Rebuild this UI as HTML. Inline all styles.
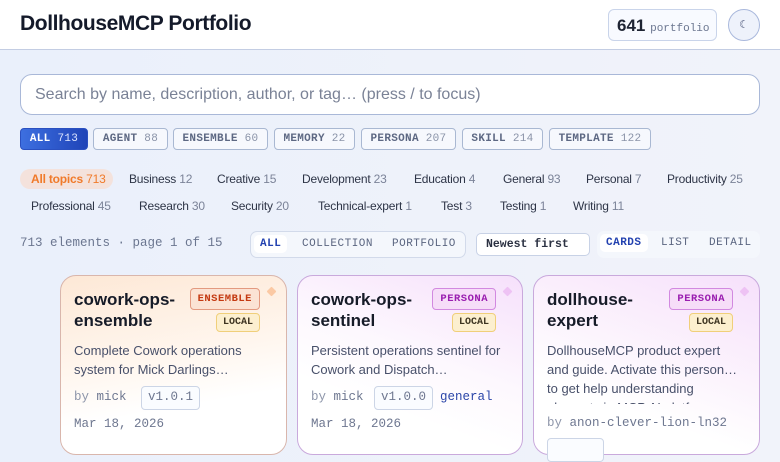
<!DOCTYPE html>
<html><head><meta charset="utf-8"><style>
*{box-sizing:border-box;margin:0;padding:0}
body{width:780px;height:441px;overflow:hidden;background:linear-gradient(90deg,#eaf0fb,#f1f3fa);font-family:"Liberation Sans",sans-serif;color:#1e2433;position:relative}
.mono{font-family:"Liberation Mono",monospace}
.hdr{position:absolute;left:0;top:0;width:780px;height:50px;background:#fff;border-bottom:1px solid #c3cde3}
.title{position:absolute;left:20px;top:12px;font-size:21px;font-weight:bold;letter-spacing:-0.4px;color:#141a2a}
.cnt{position:absolute;left:608px;top:9px;width:109px;height:32px;border:1px solid #c9d4ea;border-radius:6px;background:#f8faff;font-size:17px;font-weight:bold;padding:6px 0 0 8px}
.cnt span{font-family:"Liberation Mono",monospace;font-weight:normal;font-size:11px;color:#6b7690}
.moon{position:absolute;left:728px;top:9px;width:32px;height:32px;border:1px solid #a9b8dc;border-radius:50%;background:#eef2fb;text-align:center;line-height:30px;font-size:11px;color:#4a5578}
.search{position:absolute;left:20px;top:74px;width:740px;height:41px;border:1px solid #a9b8d8;border-radius:12px;background:#fff;padding:11px 14px;font-size:16px;color:#7a8296}
.chip{position:absolute;top:128px;height:22px;border:1px solid #a9b8d2;border-radius:4px;background:#f6f8fd;font-family:"Liberation Mono",monospace;font-size:11px;font-weight:bold;color:#5d6883;padding:4px 0;text-align:center;letter-spacing:0.3px}
.chip b{font-weight:normal;color:#8a93a8}
.chip.on{background:linear-gradient(90deg,#3d6fe0,#1f44b8);color:#fff;border-color:#2a50c0}
.chip.on b{color:#dde6ff}
.tp{position:absolute;font-size:12px;color:#2d3446;white-space:nowrap;letter-spacing:-0.2px}
.tp b{font-weight:normal;color:#7b8398}
.allt{position:absolute;left:20px;top:169px;width:93px;height:20px;border-radius:10px;background:#f4e2dc;color:#f07a2a;font-size:12px;font-weight:bold;padding:3px 0 0 11px;letter-spacing:-0.2px}
.allt b{font-weight:normal}
.meta{position:absolute;left:20px;top:236px;font-size:12.5px;color:#6b7690}
.seg{position:absolute;top:231px;height:27px;border:1px solid #d2daea;border-radius:7px;background:#f4f7fc;font-family:"Liberation Mono",monospace;font-size:11px;color:#5a6580}
.seg span{position:absolute;top:6px;letter-spacing:0.5px}
.seg .a{background:#fff;color:#2342b0;font-weight:bold;border-radius:5px;top:3px;padding:3px 6px}
.sel{position:absolute;left:476px;top:233px;width:114px;height:23px;border:1px solid #c8d2e6;border-radius:5px;background:#fff;font-family:"Liberation Mono",monospace;font-size:11.5px;font-weight:bold;color:#2b3142;padding:4px 9px}
.card{position:absolute;top:275px;height:180px;border:1px solid #c6b0c0;border-radius:16px;background:#fff}
.c1{left:60px;width:227px;background:linear-gradient(170deg,#fde8d6 0%,#fff6ee 45%,#fff 70%);border-color:#d9b6ac}
.c2{left:297px;width:226px;background:linear-gradient(200deg,#f6e0fb 0%,#fdf8fe 45%,#fff 70%);border-color:#c9a9dc}
.c3{left:533px;width:227px;background:linear-gradient(200deg,#f6e0fb 0%,#fcf4fd 45%,#fff 70%);border-color:#c9a9dc}
.ct{position:absolute;left:13px;top:13px;font-size:17px;font-weight:bold;line-height:21px;color:#161b28}
.badge{position:absolute;right:26px;top:12px;height:22px;border-radius:4px;font-family:"Liberation Mono",monospace;font-size:10.5px;font-weight:bold;padding:4px 7px;letter-spacing:0.5px}
.be{border:1px solid #e39a80;background:#fbe3d4;color:#c43a12}
.bp{border:1px solid #d289e0;background:#f6ddf8;color:#9a1eb0}
.loc{position:absolute;right:26px;top:37px;height:19px;border:1px solid #f0cf7a;background:#fcefcf;border-radius:4px;font-family:"Liberation Mono",monospace;font-size:10px;font-weight:bold;color:#3c3320;padding:3px 6px}
.dot{position:absolute;right:11px;top:12px;width:7px;height:7px;transform:rotate(45deg);border-radius:1px}
.desc{position:absolute;left:13px;top:65px;width:200px;font-size:13px;line-height:19px;color:#48506a}
.by{position:absolute;left:13px;font-family:"Liberation Mono",monospace;font-size:12.5px;color:#8e96aa}
.by i{font-style:normal;color:#6e7790}
.ver{position:absolute;top:110px;height:24px;border:1px solid #ccd5e6;border-radius:4px;background:#fafcff;font-family:"Liberation Mono",monospace;font-size:12.5px;color:#6e7790;padding:3px 6px}
.date{position:absolute;left:13px;top:141px;font-family:"Liberation Mono",monospace;font-size:12.5px;color:#6e7790}
</style></head><body>
<div class="hdr"><div class="title">DollhouseMCP Portfolio</div>
<div class="cnt">641 <span>portfolio</span></div><div class="moon">☾</div></div>
<div class="search">Search by name, description, author, or tag… (press / to focus)</div>
<div class="chip on" style="left:20px;width:68px">ALL <b>713</b></div>
<div class="chip" style="left:93px;width:75px">AGENT <b>88</b></div>
<div class="chip" style="left:173px;width:95px">ENSEMBLE <b>60</b></div>
<div class="chip" style="left:274px;width:81px">MEMORY <b>22</b></div>
<div class="chip" style="left:361px;width:95px">PERSONA <b>207</b></div>
<div class="chip" style="left:462px;width:81px">SKILL <b>214</b></div>
<div class="chip" style="left:549px;width:102px">TEMPLATE <b>122</b></div>
<div class="allt">All topics <b>713</b></div>
<div class="tp" style="left:129px;top:172px">Business <b>12</b></div>
<div class="tp" style="left:217px;top:172px">Creative <b>15</b></div>
<div class="tp" style="left:302px;top:172px">Development <b>23</b></div>
<div class="tp" style="left:414px;top:172px">Education <b>4</b></div>
<div class="tp" style="left:503px;top:172px">General <b>93</b></div>
<div class="tp" style="left:586px;top:172px">Personal <b>7</b></div>
<div class="tp" style="left:667px;top:172px">Productivity <b>25</b></div>
<div class="tp" style="left:31px;top:199px">Professional <b>45</b></div>
<div class="tp" style="left:139px;top:199px">Research <b>30</b></div>
<div class="tp" style="left:231px;top:199px">Security <b>20</b></div>
<div class="tp" style="left:318px;top:199px">Technical-expert <b>1</b></div>
<div class="tp" style="left:441px;top:199px">Test <b>3</b></div>
<div class="tp" style="left:500px;top:199px">Testing <b>1</b></div>
<div class="tp" style="left:573px;top:199px">Writing <b>11</b></div>
<div class="meta mono">713 elements · page 1 of 15</div>
<div class="seg" style="left:250px;width:216px"><span class="a" style="left:3px">ALL</span><span style="left:51px">COLLECTION</span><span style="left:141px">PORTFOLIO</span></div>
<div class="sel">Newest first</div>
<div class="seg" style="left:597px;width:163px;border:none"><span class="a" style="left:3px">CARDS</span><span style="left:64px">LIST</span><span style="left:112px">DETAIL</span></div>

<div class="card c1"><div class="ct">cowork-ops-<br>ensemble</div><div class="badge be">ENSEMBLE</div><div class="loc">LOCAL</div><div class="dot" style="background:#fbc9a4"></div>
<div class="desc">Complete Cowork operations system for Mick Darlings…</div>
<div class="by" style="top:114px">by <i>mick</i></div><div class="ver" style="left:80px">v1.0.1</div><div class="date">Mar 18, 2026</div></div>
<div class="card c2"><div class="ct">cowork-ops-<br>sentinel</div><div class="badge bp">PERSONA</div><div class="loc">LOCAL</div><div class="dot" style="background:#eec2f4"></div>
<div class="desc">Persistent operations sentinel for Cowork and Dispatch…</div>
<div class="by" style="top:114px">by <i>mick</i></div><div class="ver" style="left:76px">v1.0.0</div><div class="by" style="left:142px;top:114px;color:#2b45a8">general</div><div class="date">Mar 18, 2026</div></div>
<div class="card c3"><div class="ct">dollhouse-<br>expert</div><div class="badge bp">PERSONA</div><div class="loc">LOCAL</div><div class="dot" style="background:#eec2f4"></div>
<div class="desc" style="width:210px;height:63px;overflow:hidden;white-space:nowrap">DollhouseMCP product expert<br>and guide. Activate this person…<br>to get help understanding<br>elements in MCP AI platforms</div>
<div class="by" style="top:140px">by <i>anon-clever-lion-ln32</i></div>
<div class="ver" style="left:13px;top:162px;width:57px">&nbsp;</div></div>
</body></html>
